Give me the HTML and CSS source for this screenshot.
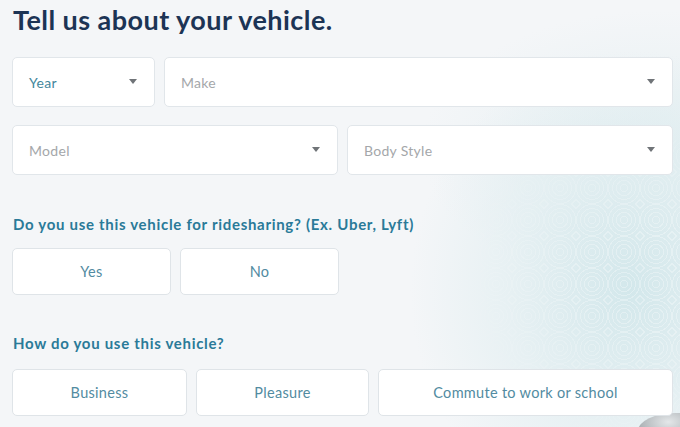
FILE: index.html
```html
<!DOCTYPE html>
<html lang="en">
<head>
<meta charset="utf-8">
<title>Tell us about your vehicle</title>
<link rel="stylesheet" href="styles.css">
</head>
<body>
<div class="page">
  <div class="bg-art" aria-hidden="true"></div>
  <div class="bg-rings" aria-hidden="true"></div>
  <div class="car-edge" aria-hidden="true"></div>
  <main class="form">
    <h1 class="title">Tell us about your vehicle.</h1>

    <div class="row row-top">
      <div class="select select-year"><span class="val filled">Year</span><span class="caret"></span></div>
      <div class="select"><span class="val">Make</span><span class="caret"></span></div>
    </div>

    <div class="row row-half">
      <div class="select"><span class="val">Model</span><span class="caret"></span></div>
      <div class="select"><span class="val">Body Style</span><span class="caret"></span></div>
    </div>

    <h2 class="question q1">Do you use this vehicle for ridesharing? (Ex. Uber, Lyft)</h2>
    <div class="row row-yesno">
      <button class="choice">Yes</button>
      <button class="choice">No</button>
    </div>

    <h2 class="question q2">How do you use this vehicle?</h2>
    <div class="row row-use">
      <button class="choice">Business</button>
      <button class="choice">Pleasure</button>
      <button class="choice">Commute to work or school</button>
    </div>
  </main>
</div>
</body>
</html>
```

FILE: styles.css
```css
* { box-sizing: border-box; }

html, body {
  margin: 0;
  padding: 0;
}

body {
  background: #f4f6f8;
  font-family: "Lato", "Open Sans", sans-serif;
}

.page {
  position: relative;
  width: 680px;
  height: 427px;
  overflow: hidden;
}

.bg-art {
  position: absolute;
  right: 0;
  top: 0;
  width: 380px;
  height: 427px;
  background:
    radial-gradient(ellipse 220px 240px at 330px 290px, rgba(205,229,233,0.85), rgba(220,236,239,0.55) 55%, rgba(244,246,248,0) 100%),
    radial-gradient(ellipse 240px 140px at 360px 150px, rgba(218,234,237,0.6), rgba(244,246,248,0) 100%);
}

.bg-rings {
  position: absolute;
  right: 0;
  top: 140px;
  width: 200px;
  height: 287px;
  background-image: repeating-radial-gradient(circle at 16px 16px, rgba(255,255,255,0) 0 3px, rgba(255,255,255,0.3) 3px 4px);
  background-size: 32px 32px;
  -webkit-mask-image: radial-gradient(ellipse 200px 180px at 170px 140px, #000 30%, transparent 100%);
  mask-image: radial-gradient(ellipse 200px 180px at 170px 140px, #000 30%, transparent 100%);
}

.car-edge {
  position: absolute;
  right: -34px;
  bottom: -22px;
  width: 76px;
  height: 36px;
  border-radius: 50%;
  background: radial-gradient(ellipse at 40% 25%, #e4e7e9, #8f979b 70%);
}

.form {
  position: relative;
  z-index: 1;
  width: 661px;
  margin-left: 12px;
  padding-top: 3px;
}

.title {
  margin: 0 0 0 1px;
  font-size: 27px;
  line-height: 34px;
  font-weight: 700;
  color: #1c3455;
  letter-spacing: 0.45px;
}

.row {
  display: flex;
  gap: 9px;
}

.row-top {
  margin-top: 20px;
}
.row-top .select-year { flex: 0 0 143px; }
.row-top .select:not(.select-year) { flex: 1 1 auto; }

.row-half {
  margin-top: 18px;
}
.row-half .select { flex: 1 1 0; }

.select {
  height: 50px;
  background: #fff;
  border: 1px solid #e1e6ea;
  border-radius: 5px;
  display: flex;
  align-items: center;
  justify-content: space-between;
  padding: 0 17px 0 16px;
}

.val {
  font-size: 14px;
  color: #a4a7aa;
  padding-top: 1px;
  letter-spacing: 0.3px;
}
.val.filled { color: #44879c; }

.caret {
  width: 0;
  height: 0;
  border-left: 4.5px solid transparent;
  border-right: 4.5px solid transparent;
  border-top: 5px solid #707478;
  margin-top: -2px;
}

.question {
  margin: 0 0 0 1px;
  font-size: 15px;
  font-weight: 700;
  color: #2a7a98;
  line-height: 20px;
  letter-spacing: 0.7px;
}
.q1 { margin-top: 39px; }
.q2 { margin-top: 38px; }

.choice {
  font-family: inherit;
  height: 47px;
  background: #fff;
  border: 1px solid #dfe4e8;
  border-radius: 5px;
  font-size: 14.5px;
  color: #528ba1;
  padding: 0;
  letter-spacing: 0.3px;
  cursor: pointer;
}

.row-yesno { margin-top: 14px; }
.row-yesno .choice { flex: 0 0 159px; }

.row-use { margin-top: 16px; }
.row-use .choice:nth-child(1) { flex: 0 0 175px; }
.row-use .choice:nth-child(2) { flex: 0 0 173px; }
.row-use .choice:nth-child(3) { flex: 1 1 auto; }
```
